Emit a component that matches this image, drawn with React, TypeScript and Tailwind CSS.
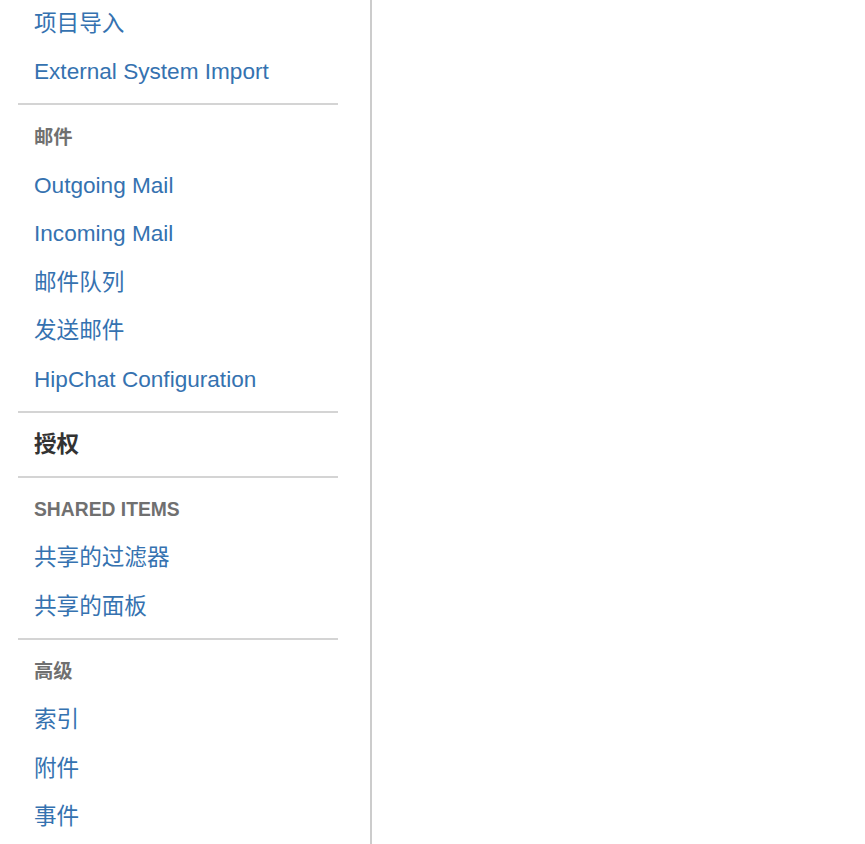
const font = { fontFamily: '"Liberation Sans", "Noto Sans CJK SC", Arial, sans-serif' }

type Section = { heading?: string; strong?: string; items: string[] }

const sections: Section[] = [
  { items: ['项目导入', 'External System Import'] },
  { heading: '邮件', items: ['Outgoing Mail', 'Incoming Mail', '邮件队列', '发送邮件', 'HipChat Configuration'] },
  { strong: '授权', items: [] },
  { heading: 'SHARED ITEMS', items: ['共享的过滤器', '共享的面板'] },
  { heading: '高级', items: ['索引', '附件', '事件'] },
]

function Link({ label }: { label: string }) {
  return (
    <li className="h-[48.5px] flex items-center pl-4 pt-[2px]">
      <a href="#" className="text-[22.6px] text-[#3572b0] leading-none whitespace-nowrap">{label}</a>
    </li>
  )
}

export default function App() {
  return (
    <div className="w-[865px] h-[844px] overflow-hidden bg-white flex" style={font}>
      <nav className="w-[372px] shrink-0 border-r-2 border-[#cccccc] pl-[18px] pr-[32px]">
        <div className="-mt-[1.25px]">
          {sections.map((s, i) => (
            <div key={i}>
              {i > 0 && <div className="h-[2px] bg-[#d4d4d4] my-[7.25px]" />}
              {s.heading && (
                <div className="h-[48.5px] flex items-center pl-4 pt-[2px] text-[19.3px] font-bold text-[#707070] leading-none">
                  {s.heading}
                </div>
              )}
              {s.strong && (
                <div className="h-[48.5px] flex items-center pl-4 pt-[2px] text-[22.6px] font-bold text-[#333333] leading-none">
                  {s.strong}
                </div>
              )}
              <ul>
                {s.items.map(label => <Link key={label} label={label} />)}
              </ul>
            </div>
          ))}
        </div>
      </nav>
      <main className="flex-1" />
    </div>
  )
}
